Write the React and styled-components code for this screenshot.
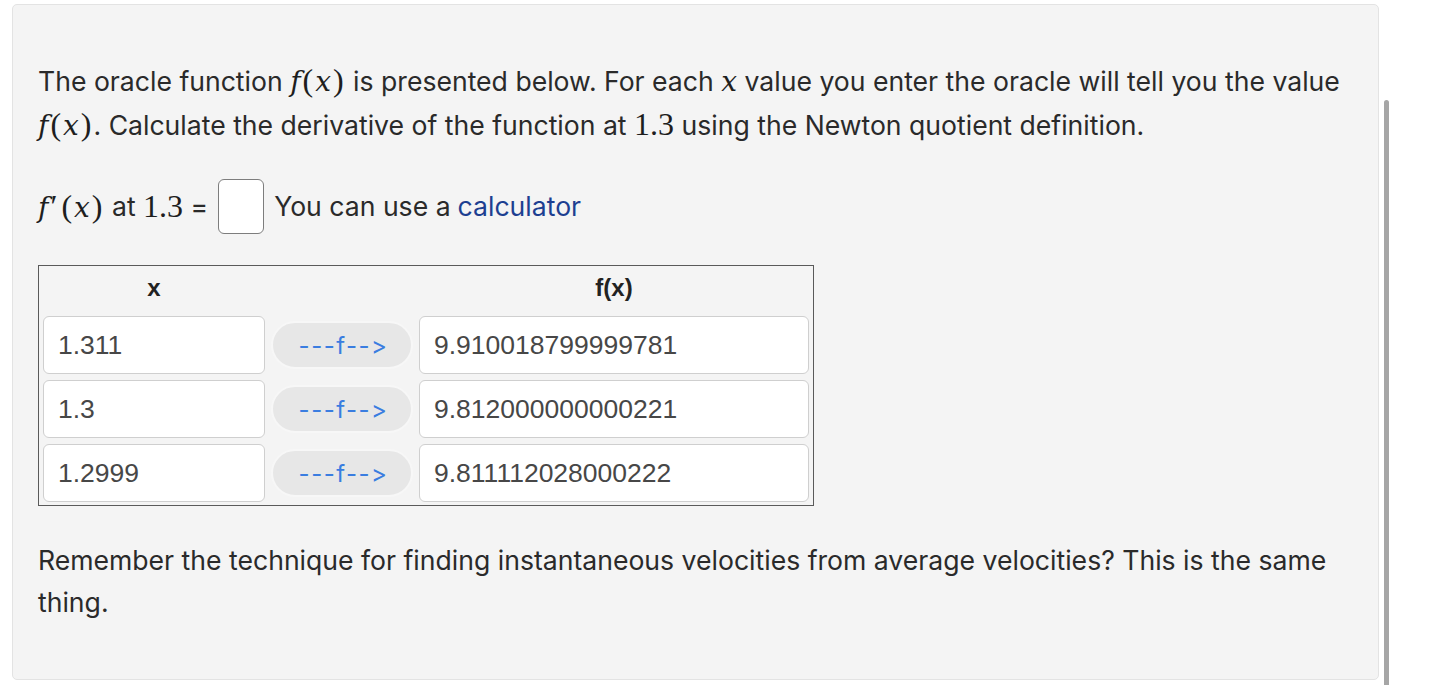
import React from 'react';
import styled, { createGlobalStyle } from 'styled-components';

const Global = createGlobalStyle`
    html, body {
        margin: 0;
        background: #fff;
    }
    body {
        font-family: Inter, "Noto Sans", sans-serif;
        color: #2a2a2a;
    }
`;

const Page = styled.div`
    padding: 4px 62px 5px 12px;
`;

const Card = styled.section`
    box-sizing: border-box;
    height: 676px;
    background-color: #f4f4f4;
    border: 1px solid #e3e3e3;
    border-radius: 5px;
    padding: 54px 26px 0 25px;
`;

const Para = styled.p`
    margin: 0;
    font-size: 26.6px;
    line-height: 42px;
`;

// math variables (italic) and upright symbols / numbers
const Var = styled.span`
    font-family: "DejaVu Serif", "Liberation Serif", serif;
    font-style: italic;
    font-size: 28px;
    color: #1e1e1e;
`;

const Sym = styled.span`
    font-family: "Liberation Serif", "DejaVu Serif", serif;
    font-size: 32px;
    padding: 0 ${props => props.pad || 0}px;
    color: #1e1e1e;
`;

const Fx = ({ prime }) => (
    <span>
        <Var>f</Var>
        {prime && <Sym pad="2">′</Sym>}
        <Sym pad="2">(</Sym>
        <Var>x</Var>
        <Sym pad="2">)</Sym>
    </span>
);

const AnswerRow = styled.div`
    display: flex;
    align-items: center;
    margin-top: 31px;
    font-size: 26.6px;
    height: 56px;
`;

const AnswerBox = styled.input`
    box-sizing: border-box;
    width: 46px;
    height: 55px;
    margin: 0 10px 0 10px;
    border: 1.5px solid #7d7d7d;
    border-radius: 6px;
    background: #fff;
`;

const Link = styled.a`
    color: #1d3f91;
    text-decoration: none;
    margin-left: 7px;
`;

const Table = styled.div`
    box-sizing: border-box;
    width: 776px;
    margin-top: 31px;
    border: 1px solid #5a5a5a;
    padding: 0 3px 3px 4px;
    display: grid;
    grid-template-columns: 222px 142px 390px;
    column-gap: 6px;
    row-gap: 6px;
    font-family: "Liberation Sans", Arial, sans-serif;
`;

const Head = styled.div`
    grid-column: ${props => props.col};
    height: 44px;
    display: flex;
    align-items: center;
    justify-content: center;
    font-weight: bold;
    font-size: 24px;
    color: #222;
`;

const Field = styled.div`
    box-sizing: border-box;
    height: 58px;
    display: flex;
    align-items: center;
    padding-left: 14px;
    background: #fff;
    border: 1.5px solid #cfcfcf;
    border-radius: 6px;
    font-size: 26.5px;
    color: #474747;
`;

const Arrow = styled.button`
    align-self: center;
    height: 48px;
    border: 2px solid #f7f7f7;
    border-radius: 24px;
    background: #e7e7e7;
    color: #3a7de0;
    font-family: Inter, "Liberation Sans", sans-serif;
    font-size: 24px;
    letter-spacing: 1.5px;
    padding: 0 0 0 3px;
    cursor: pointer;
`;

const Note = styled(Para)`
    margin-top: 33px;
`;

const Scroll = styled.div`
    position: fixed;
    left: 1384px;
    top: 100px;
    bottom: 0;
    width: 5px;
    background: #a6a6a6;
    border-radius: 3px 3px 0 0;
`;

const rows = [
    ['1.311', '9.910018799999781'],
    ['1.3', '9.812000000000221'],
    ['1.2999', '9.811112028000222'],
];

const App = () => {
    return (
        <Page>
            <Global />
            <Card>
                <Para>
                    The oracle function <Fx /> is presented below. For each <Var>x</Var> value you enter the oracle will tell you the value <Fx />. Calculate the derivative of the function at <Sym>1.3</Sym> using the Newton quotient definition.
                </Para>
                <AnswerRow>
                    <Fx prime />&nbsp;at&nbsp;<Sym>1.3</Sym>&nbsp;=
                    <AnswerBox type="text" aria-label="answer" />
                    You can use a <Link href="#">calculator</Link>
                </AnswerRow>
                <Table>
                    <Head col="1">x</Head>
                    <Head col="3">f(x)</Head>
                    {rows.map(([x, fx]) => (
                        <React.Fragment key={x}>
                            <Field>{x}</Field>
                            <Arrow>---f--&gt;</Arrow>
                            <Field>{fx}</Field>
                        </React.Fragment>
                    ))}
                </Table>
                <Note>
                    Remember the technique for finding instantaneous velocities from average velocities? This is the same thing.
                </Note>
            </Card>
            <Scroll />
        </Page>
    );
};

export default App;
